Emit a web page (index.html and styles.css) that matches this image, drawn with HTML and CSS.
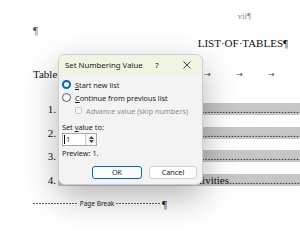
FILE: index.html
```html
<!DOCTYPE html>
<html lang="en">
<head>
    <meta charset="UTF-8">
    <meta name="viewport" content="width=device-width, initial-scale=1.0">
    <title>Set Numbering Value</title>
    <link rel="stylesheet" href="styles.css">
</head>
<body>
  <div class="page">
    <div class="folio">vii¶</div>
    <div class="para">¶</div>
    <div class="heading">LIST·OF·TABLES¶</div>
    <div class="tabline">
      <span class="caption">Table·</span><span class="tab">→</span><span class="tab">→</span><span class="tab">→</span>
    </div>

    <div class="toc">
      <div class="toc-row"><span class="num">1.</span><div class="band"><span class="title">Enrolment</span><span class="dots">......................................................................</span></div></div>
      <div class="toc-row"><span class="num">2.</span><div class="band"><span class="title">Staffing</span><span class="dots">......................................................................</span></div></div>
      <div class="toc-row"><span class="num">3.</span><div class="band"><span class="title">Facilities</span><span class="dots">......................................................................</span></div></div>
      <div class="toc-row"><span class="num">4.</span><div class="band"><span class="title long">Student Activities</span><span class="dots">..........................</span></div></div>
    </div>

    <div class="page-break">
      <span class="rule"></span><span class="pb-label">Page Break</span><span class="rule"></span><span class="mark">¶</span>
    </div>
  </div>

  <!-- dialog floats over the document -->
  <div class="dialog">
    <div class="dialog-title">
      <span class="dialog-name">Set Numbering Value</span>
      <span class="help">?</span>
      <span class="close">
        <svg width="8" height="8" viewBox="0 0 8 8"><path d="M0.5 0.5 L7.5 7.5 M7.5 0.5 L0.5 7.5" stroke="#333" stroke-width="0.9" fill="none"/></svg>
      </span>
    </div>
    <div class="dialog-body">
      <div class="option"><span class="radio checked"></span><span><u>S</u>tart new list</span></div>
      <div class="option"><span class="radio"></span><span><u>C</u>ontinue from previous list</span></div>
      <div class="option sub disabled"><span class="check"></span><span>Advance value (skip numbers)</span></div>

      <div class="field-label">Set <u>v</u>alue to:</div>
      <div class="spinner">
        <span class="spin-value"><span class="caret"></span>1</span>
        <span class="spin-btns">
          <svg width="5" height="3" viewBox="0 0 5 3"><path d="M0 3 L2.5 0 L5 3 Z" fill="#444"/></svg>
          <svg width="5" height="3" viewBox="0 0 5 3"><path d="M0 0 L2.5 3 L5 0 Z" fill="#444"/></svg>
        </span>
      </div>
      <div class="preview">Preview: 1.</div>

      <div class="buttons">
        <button class="btn primary">OK</button>
        <button class="btn">Cancel</button>
      </div>
    </div>
  </div>
</body>
</html>
```

FILE: styles.css
```css
body {
  margin: 0;
  width: 300px;
  height: 240px;
  overflow: hidden;
  background: #fff;
  font-family: "Liberation Serif", "Times New Roman", serif;
  font-size: 11px;
  color: #111;
}

/* document page */
.page {
  width: 267px;
  padding-left: 33px;
  padding-top: 10px;
}
.folio {
  height: 12px;
  line-height: 12px;
  text-align: right;
  padding-right: 49px;
  font-size: 9px;
  color: #888;
}
.para {
  margin-top: 2px;
  height: 12px;
  line-height: 12px;
  color: #555;
}
.heading {
  margin-top: 1px;
  height: 12px;
  line-height: 12px;
  text-align: right;
  padding-right: 12px;
}
.tabline {
  margin-top: 19px;
  height: 13px;
  line-height: 13px;
  display: flex;
}
.caption {
  width: 172px;
}
.tab {
  width: 32px;
  font-family: "DejaVu Sans", sans-serif;
  font-size: 8px;
  color: #444;
}

/* table of contents rows */
.toc {
  margin-top: 22px;
  display: flex;
  flex-direction: column;
  gap: 11.5px;
}
.toc-row {
  display: flex;
  height: 12px;
  line-height: 12px;
}
.num {
  width: 23px;
  text-align: right;
  flex: none;
}
.band {
  margin-left: 2px;
  flex: 1;
  display: flex;
  background: #c6c6c6;
  overflow: hidden;
  white-space: nowrap;
}
.title {
  width: 120px;
  flex: none;
  text-align: right;
}
.title.long {
  width: 171px;
}
.dots {
  letter-spacing: 0.2px;
}

.page-break {
  margin-top: 14px;
  height: 8px;
  display: flex;
  align-items: center;
  width: 134px;
  font-family: "Noto Sans", sans-serif;
  font-size: 6.5px;
  color: #222;
}
.rule {
  flex: 1;
  height: 1px;
  background: repeating-linear-gradient(90deg, #666 0 2px, transparent 2px 3px);
}
.pb-label {
  padding: 0 2px;
}
.mark {
  font-family: "Liberation Serif", serif;
  font-size: 11px;
  margin-left: 1px;
}

/* dialog */
.dialog {
  position: absolute;
  left: 58px;
  top: 54px;
  width: 143px;
  height: 129px;
  border: 1px solid #cdcdcd;
  border-radius: 7px;
  background: #f3f3f3;
  box-shadow: 0 12px 34px rgba(0, 0, 0, 0.3);
  overflow: hidden;
  font-family: "Noto Sans", "Segoe UI", sans-serif;
  font-size: 7.3px;
  color: #1b1b1b;
}
.dialog-title {
  height: 20px;
  display: flex;
  align-items: center;
  padding-left: 6px;
  background: #eef5e1;
  font-size: 7.8px;
}
.dialog-name {
  flex: 1;
}
.help {
  width: 16px;
  text-align: center;
  margin-right: 7px;
}
.close {
  width: 30px;
  display: flex;
  justify-content: center;
}

.dialog-body {
  padding: 3px 5px 0 3px;
}
.option {
  height: 13px;
  display: flex;
  align-items: center;
  gap: 4px;
}
.option.sub {
  padding-left: 13px;
}
.disabled {
  color: #8d8d8d;
}
.radio {
  width: 9px;
  height: 9px;
  box-sizing: border-box;
  border-radius: 50%;
  border: 1px solid #5c5c5c;
  background: #fafafa;
  flex: none;
}
.radio.checked {
  border: 2.5px solid #0067c0;
  background: #fff;
}
.check {
  width: 7px;
  height: 7px;
  box-sizing: border-box;
  border: 1px solid #c4c4c4;
  border-radius: 1.5px;
  background: #f6f6f6;
  flex: none;
}

.field-label {
  margin-top: 4px;
  height: 12px;
  line-height: 12px;
}
.spinner {
  width: 35px;
  height: 13px;
  box-sizing: border-box;
  display: flex;
  border: 1px solid #a9a9a9;
  background: #fff;
}
.spin-value {
  flex: 1;
  display: flex;
  align-items: center;
  padding-left: 1px;
  line-height: 11px;
}
.caret {
  width: 1px;
  height: 9px;
  background: #000;
  margin-right: 1px;
}
.spin-btns {
  width: 10px;
  border-left: 1px solid #c8c8c8;
  display: flex;
  flex-direction: column;
  align-items: center;
  justify-content: space-evenly;
  background: #f7f7f7;
}
.spin-btns svg {
  display: block;
}
.preview {
  margin-top: 1px;
  height: 12px;
  line-height: 12px;
}

.buttons {
  margin-top: 7px;
  display: flex;
  justify-content: flex-end;
  gap: 7px;
}
.btn {
  width: 48px;
  height: 13px;
  padding: 0;
  border: 1px solid #d0d0d0;
  border-radius: 3px;
  background: #fdfdfd;
  font-family: inherit;
  font-size: 7.3px;
  color: #1b1b1b;
  line-height: 11px;
}
.btn.primary {
  width: 50px;
  border-color: #0067c0;
}
```
